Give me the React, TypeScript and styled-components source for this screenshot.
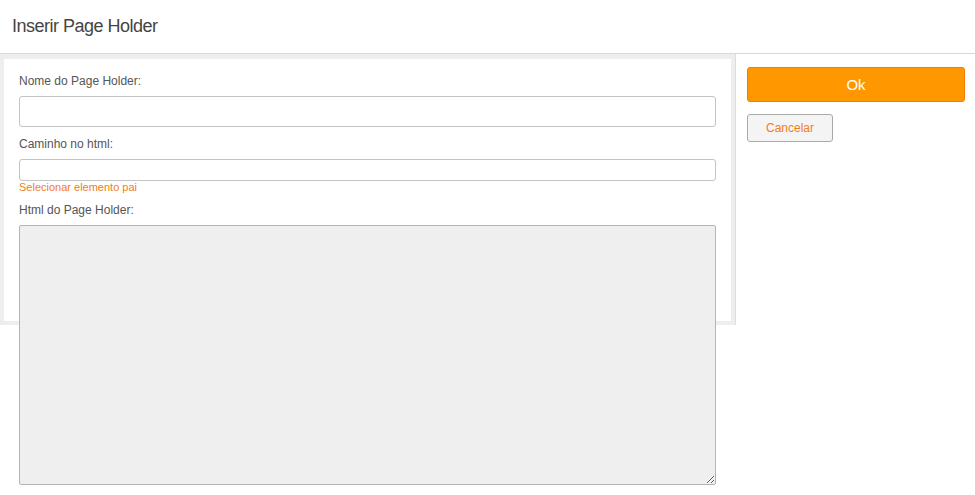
import React from "react";
import styled, { createGlobalStyle } from "styled-components";

const Global = createGlobalStyle`
  html, body { margin: 0; padding: 0; background: #fff; }
  body { font-family: "Liberation Sans", Arial, sans-serif; }
  #root { min-height: 100vh; }
  * { box-sizing: border-box; }
`;

const Header = styled.div`
  height: 54px;
  border-bottom: 1px solid #d9d9d9;
  display: flex;
  align-items: center;
  padding: 0 12px;
`;

const Title = styled.h1`
  margin: 0;
  font-size: 18px;
  font-weight: normal;
  color: #444;
  letter-spacing: -0.5px;
`;

const Body = styled.div`
  display: flex;
  align-items: flex-start;
`;

const Main = styled.div`
  width: 736px;
  height: 271px;
  background: #eeeeee;
  border-right: 1px solid #dddddd;
  padding: 5px 4px 4px 4px;
`;

const Panel = styled.div`
  background: #fff;
  height: 262px;
  padding: 14px 15px 0 15px;
`;

const Label = styled.label<{ $mt?: number }>`
  display: block;
  font-size: 12px;
  line-height: 16px;
  color: #555;
  margin-top: ${(p) => p.$mt ?? 0}px;
  margin-bottom: 7px;
`;

const Input = styled.input<{ $h: number }>`
  display: block;
  width: 100%;
  height: ${(p) => p.$h}px;
  border: 1px solid #c4c4c4;
  border-radius: 3px;
  background: #fff;
  outline: none;
  margin: 0;
`;

const Link = styled.a`
  display: block;
  font-size: 11px;
  line-height: 12px;
  color: #f47c20;
  text-decoration: none;
  cursor: pointer;
`;

const TextArea = styled.textarea`
  display: block;
  width: 100%;
  height: 260px;
  margin: 0;
  background: #efefef;
  border: 1px solid #b4b4b4;
  border-radius: 2px;
  outline: none;
  resize: both;
`;

const Side = styled.div`
  flex: 1;
  padding: 13px 10px 0 11px;
  display: flex;
  flex-direction: column;
  align-items: flex-start;
`;

const OkButton = styled.button`
  width: 218px;
  height: 35px;
  background: #ff9800;
  border: 1px solid #f57c00;
  border-radius: 3px;
  color: #fff;
  font-family: "Liberation Sans", Arial, sans-serif;
  font-size: 15px;
  cursor: pointer;
`;

const CancelButton = styled.button`
  margin-top: 12px;
  width: 86px;
  height: 28px;
  background: #f4f4f4;
  border: 1px solid #aaaaaa;
  border-radius: 3px;
  color: #f47c20;
  font-family: "Liberation Sans", Arial, sans-serif;
  font-size: 12px;
  cursor: pointer;
`;

export default function App() {
  return (
    <>
      <Global />
      <Header>
        <Title>Inserir Page Holder</Title>
      </Header>
      <Body>
        <Main>
          <Panel>
            <Label>Nome do Page Holder:</Label>
            <Input $h={31} />
            <Label $mt={9}>Caminho no html:</Label>
            <Input $h={22} />
            <Link>Selecionar elemento pai</Link>
            <Label $mt={9}>Html do Page Holder:</Label>
            <TextArea />
          </Panel>
        </Main>
        <Side>
          <OkButton>Ok</OkButton>
          <CancelButton>Cancelar</CancelButton>
        </Side>
      </Body>
    </>
  );
}
